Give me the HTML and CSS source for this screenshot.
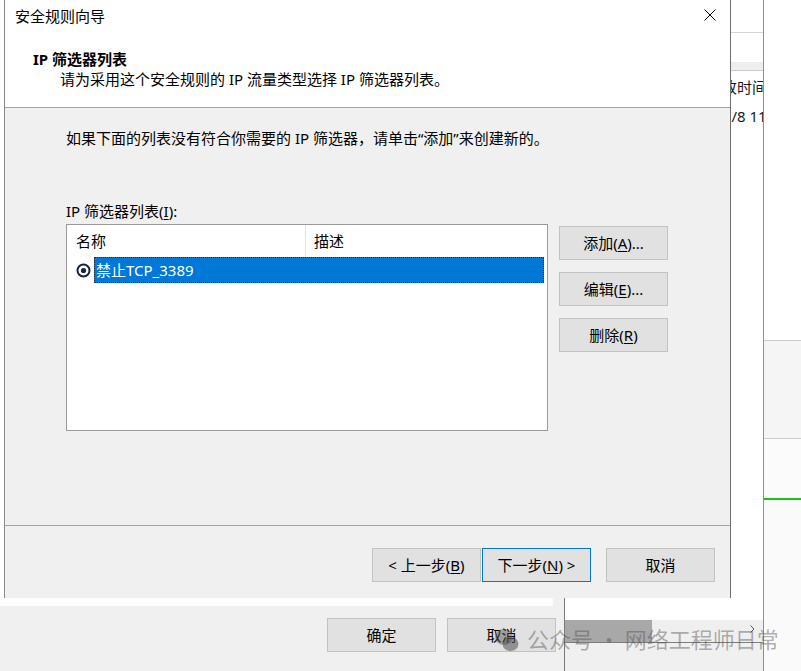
FILE: index.html
```html
<!DOCTYPE html>
<html lang="zh-CN">
<head>
<meta charset="utf-8">
<title>安全规则向导</title>
<link rel="stylesheet" href="styles.css">
</head>
<body>
<div class="desktop">
  <div class="explorer">
    <div class="ex-toolbar"></div>
    <div class="ex-gap"></div>
    <div class="ex-band"></div>
    <div class="ex-head"><span>上次修改时间</span></div>
    <div class="ex-row"><span>2024/7/8 11:05:23</span></div>
    <div class="ex-fill"></div>
    <div class="ex-hscroll">
      <div class="ex-thumb"></div>
      <div class="ex-track"></div>
      <svg class="ex-arrow" width="20" height="22" viewBox="0 0 20 22"><path d="M7.5 5.5 L11 9 L7.5 12.5" stroke="#555" stroke-width="1" fill="none"/></svg>
    </div>
    <div class="ex-status"></div>
  </div>

  <div class="side-panel">
    <div class="sp-a"></div>
    <div class="sp-b"></div>
    <div class="sp-c"></div>
    <div class="sp-green"></div>
    <div class="sp-d"></div>
  </div>

  <div class="prop-win">
    <div class="pw-strip"></div>
    <div class="pw-buttons">
      <button class="btn">确定</button>
      <button class="btn">取消</button>
    </div>
  </div>

  <div class="dialog">
    <div class="dlg-top">
      <div class="titlebar">
        <span class="title">安全规则向导</span>
        <svg class="close" width="12" height="12" viewBox="0 0 12 12"><path d="M0.5 0.5 L11.5 11.5 M11.5 0.5 L0.5 11.5" stroke="#000" stroke-width="1" fill="none"/></svg>
      </div>
      <div class="hdr-title">IP 筛选器列表</div>
      <div class="hdr-sub">请为采用这个安全规则的 IP 流量类型选择 IP 筛选器列表。</div>
    </div>

    <div class="dlg-body">
      <p class="intro">如果下面的列表没有符合你需要的 IP 筛选器，请单击“添加”来创建新的。</p>
      <div class="list-label">IP 筛选器列表(<u>I</u>):</div>
      <div class="list-row">
        <div class="listbox">
          <div class="lv-head">
            <div class="col c1">名称</div>
            <div class="col c2">描述</div>
          </div>
          <div class="lv-item">
            <svg class="radio" width="15" height="15" viewBox="0 0 15 15"><circle cx="7.5" cy="7.5" r="6" stroke="#14243a" stroke-width="2" fill="#fff"/><circle cx="7.5" cy="7.5" r="2.6" fill="#14243a"/></svg>
            <span class="sel">禁止TCP_3389</span>
          </div>
        </div>
        <div class="side-btns">
          <button class="btn">添加(<u>A</u>)...</button>
          <button class="btn">编辑(<u>E</u>)...</button>
          <button class="btn">删除(<u>R</u>)</button>
        </div>
      </div>
    </div>

    <div class="dlg-foot">
      <button class="btn">&lt; 上一步(<u>B</u>)</button>
      <button class="btn btn-next">下一步(<u>N</u>) &gt;</button>
      <button class="btn btn-cancel">取消</button>
    </div>
  </div>

  <div class="watermark">
    <svg class="wm-icon" width="26" height="26" viewBox="0 0 26 26">
      <ellipse cx="10" cy="10" rx="9" ry="8" fill="rgba(80,80,80,0.45)"/>
      <ellipse cx="16.5" cy="17" rx="8" ry="7" fill="rgba(80,80,80,0.55)"/>
    </svg>
    <span class="wm-text">公众号 · 网络工程师日常</span>
  </div>
</div>
</body>
</html>
```
FILE: styles.css
```css
html, body {
  margin: 0;
  padding: 0;
  background: #fff;
}

body {
  font-family: "Noto Sans", "Noto Sans CJK SC", sans-serif;
  font-size: 15px;
  color: #000;
}

.desktop {
  position: relative;
  width: 801px;
  height: 671px;
  overflow: hidden;
  background: #fff;
}

/* ---------- background explorer-like window ---------- */
.explorer {
  position: absolute;
  left: 564px;
  top: 0;
  width: 200px;
  height: 671px;
  box-sizing: border-box;
  border-left: 1px solid #7a7a7a;
  border-right: 1px solid #8f8f8f;
  background: #fff;
  display: flex;
  flex-direction: column;
  overflow: hidden;
}

.ex-toolbar {
  height: 32px;
  border-bottom: 1px solid #d6d6d6;
  flex: none;
}

.ex-gap {
  height: 29px;
  flex: none;
}

.ex-band {
  height: 8px;
  background: #eeeeee;
  border-bottom: 1px solid #c9c9c9;
  flex: none;
}

.ex-head,
.ex-row {
  flex: none;
  white-space: nowrap;
  color: #1a1a1a;
}

.ex-head {
  height: 32px;
  line-height: 32px;
  padding-left: 112px;
}

.ex-row {
  height: 26px;
  line-height: 26px;
  padding-left: 118px;
}

.ex-fill {
  flex: 1;
}

.ex-hscroll {
  height: 22px;
  flex: none;
  display: flex;
  align-items: stretch;
  background: #efefef;
}

.ex-thumb {
  width: 87px;
  background: #a8a8a8;
}

.ex-track {
  flex: 1;
}

.ex-arrow {
  display: block;
  flex: none;
}

.ex-status {
  height: 28px;
  flex: none;
  border-top: 1px solid #7c7c7c;
  background: #f0f0f0;
}

/* ---------- far right panel ---------- */
.side-panel {
  position: absolute;
  left: 764px;
  top: 0;
  width: 37px;
  height: 671px;
  display: flex;
  flex-direction: column;
}

.sp-a {
  height: 340px;
  background: #fff;
  border-bottom: 1px solid #cbcbcb;
  flex: none;
}

.sp-b {
  height: 97px;
  background: #f5f5f5;
  border-bottom: 1px solid #cbcbcb;
  flex: none;
}

.sp-c {
  height: 59px;
  background: #fbfbfb;
  flex: none;
}

.sp-green {
  height: 2px;
  background: #19c319;
  flex: none;
}

.sp-d {
  flex: 1;
  background: #fafafa;
}

/* ---------- bottom-left property window ---------- */
.prop-win {
  position: absolute;
  left: 0;
  top: 598px;
  width: 564px;
  height: 73px;
  background: #f0f0f0;
}

.pw-strip {
  width: 553px;
  height: 8px;
  background: #fdfdfd;
}

.pw-buttons {
  display: flex;
  justify-content: flex-end;
  gap: 11px;
  padding: 12px 8px 0 0;
}

/* ---------- buttons ---------- */
.btn {
  box-sizing: border-box;
  width: 109px;
  height: 34px;
  padding: 0;
  margin: 0;
  background: #e1e1e1;
  border: 1px solid #c2c2c2;
  font-family: inherit;
  font-size: 15px;
  line-height: 32px;
  color: #000;
  text-align: center;
}

.btn u {
  text-decoration: underline;
  text-underline-offset: 2px;
}

/* ---------- wizard dialog ---------- */
.dialog {
  position: absolute;
  left: 4px;
  top: 0;
  width: 727px;
  height: 598px;
  box-sizing: border-box;
  border-left: 1px solid #8a8a8a;
  border-right: 1px solid #6e6e6e;
  background: #f0f0f0;
  display: flex;
  flex-direction: column;
}

.dlg-top {
  height: 107px;
  flex: none;
  background: #fff;
  border-bottom: 1px solid #a3a3a3;
}

.titlebar {
  height: 32px;
  display: flex;
  align-items: center;
  justify-content: space-between;
  padding: 0 14px 0 10px;
}

.title {
  line-height: 32px;
}

.close {
  display: block;
  margin-top: -2px;
}

.hdr-title {
  margin-top: 17px;
  padding-left: 28px;
  line-height: 20px;
  font-weight: bold;
}

.hdr-sub {
  padding-left: 55px;
  line-height: 20px;
}

.dlg-body {
  flex: 1;
  min-height: 0;
  padding: 20px 0 0 61px;
}

.intro {
  margin: 0;
  line-height: 20px;
}

.list-label {
  margin-top: 53px;
  line-height: 20px;
}

.list-label u {
  text-underline-offset: 2px;
}

.list-row {
  margin-top: 3px;
  display: flex;
  align-items: flex-start;
}

.listbox {
  box-sizing: border-box;
  width: 482px;
  height: 207px;
  border: 1px solid #9a9a9a;
  background: #fff;
}

.lv-head {
  display: flex;
  height: 32px;
}

.col {
  line-height: 32px;
}

.c1 {
  width: 229px;
  padding-left: 9px;
  border-right: 1px solid #e5e5e5;
}

.c2 {
  padding-left: 8px;
}

.lv-item {
  display: flex;
  align-items: center;
  height: 26px;
  padding-left: 9px;
}

.radio {
  display: block;
  flex: none;
}

.sel {
  flex: 1;
  margin: 0 3px 0 3px;
  box-sizing: border-box;
  height: 26px;
  line-height: 24px;
  padding-left: 1px;
  background: #0078d7;
  color: #fff;
  border: 1px dotted #1c3450;
}

.side-btns {
  margin: 2px 0 0 11px;
  display: flex;
  flex-direction: column;
  gap: 12px;
}

.dlg-foot {
  box-sizing: border-box;
  height: 73px;
  flex: none;
  border-top: 1px solid #a3a3a3;
  display: flex;
  justify-content: flex-end;
  align-items: flex-start;
  padding: 22px 15px 0 0;
}

.btn-next {
  margin-left: 1px;
  border-color: #0078d7;
}

.btn-cancel {
  margin-left: 15px;
}

/* ---------- watermark ---------- */
.watermark {
  position: absolute;
  left: 494px;
  top: 623px;
  display: flex;
  align-items: center;
}

.wm-icon {
  display: block;
  margin-top: 4px;
}

.wm-text {
  margin-left: 7px;
  font-family: "Noto Sans CJK SC", sans-serif;
  font-size: 22px;
  line-height: 30px;
  color: rgba(80, 80, 80, 0.45);
  white-space: nowrap;
}
```
